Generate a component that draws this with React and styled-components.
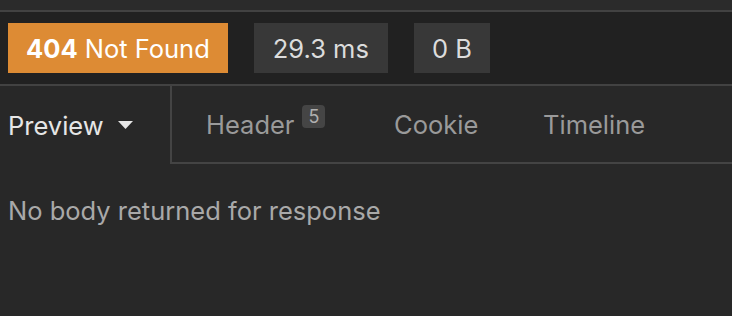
import React from "react";
import styled, { createGlobalStyle } from "styled-components";

const Global = createGlobalStyle`
  html, body {
    margin: 0;
    padding: 0;
    background: #282828;
    font-family: Inter, "Liberation Sans", sans-serif;
    -webkit-font-smoothing: antialiased;
  }
`;

const Page = styled.div`
  width: 732px;
  height: 316px;
  overflow: hidden;
  background: #282828;
  display: flex;
  flex-direction: column;
`;

const TopStrip = styled.div`
  height: 10px;
  background: #2b2b2b;
  border-bottom: 2px solid #424242;
`;

const StatusBar = styled.div`
  height: 72px;
  background: #212121;
  border-bottom: 2px solid #424242;
  display: flex;
  align-items: center;
  gap: 26px;
  padding: 0 8px;
`;

const Stat = styled.div`
  height: 50px;
  padding: 0 ${(p) => p.$pad || 19}px;
  display: flex;
  align-items: center;
  gap: 7px;
  font-size: 25.5px;
  color: ${(p) => (p.$status ? "#fff" : "#dcdcdc")};
  background: ${(p) => (p.$status ? "#dd8b34" : "#383838")};
  b {
    font-weight: 700;
  }
`;

const Tabs = styled.div`
  display: flex;
  height: 78px;
`;

const Tab = styled.div`
  display: flex;
  align-items: center;
  gap: 8px;
  width: ${(p) => p.$w}px;
  box-sizing: border-box;
  padding-left: ${(p) => p.$pl}px;
  font-size: 25.5px;
  color: ${(p) => (p.$active ? "#e6e6e6" : "#9a9a9a")};
  border-right: ${(p) => (p.$active ? "2px solid #444" : "none")};
  border-bottom: ${(p) => (p.$active ? "none" : "2px solid #444")};
  flex: ${(p) => (p.$grow ? 1 : "none")};
`;

const Count = styled.span`
  align-self: flex-start;
  margin-top: 19px;
  width: 23px;
  height: 23px;
  border-radius: 4px;
  background: #454545;
  color: #b0b0b0;
  font-size: 18px;
  display: flex;
  align-items: center;
  justify-content: center;
`;

const Caret = styled.svg`
  margin-left: 6px;
`;

const Body = styled.div`
  padding: 31px 8px;
  font-size: 25.5px;
  color: #a9a9a9;
`;

export default function App() {
  return (
    <Page>
      <Global />
      <TopStrip />
      <StatusBar>
        <Stat $status $pad={18}>
          <b>404</b> Not Found
        </Stat>
        <Stat>29.3 ms</Stat>
        <Stat $pad={18}>0 B</Stat>
      </StatusBar>
      <Tabs>
        <Tab $active $w={172} $pl={8}>
          Preview
          <Caret width="15" height="8" viewBox="0 0 15 8">
            <path d="M0 0h15L7.5 8z" fill="#e6e6e6" />
          </Caret>
        </Tab>
        <Tab $w={190} $pl={34}>
          Header<Count>5</Count>
        </Tab>
        <Tab $w={148} $pl={32}>Cookie</Tab>
        <Tab $grow $pl={33}>Timeline</Tab>
      </Tabs>
      <Body>No body returned for response</Body>
    </Page>
  );
}
